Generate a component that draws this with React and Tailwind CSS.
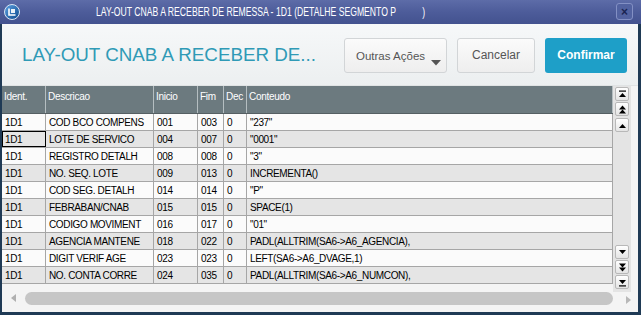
import React from "react";

const rows = [
  ["1D1", "COD BCO COMPENS", "001", "003", "0", '"237"'],
  ["1D1", "LOTE DE SERVICO", "004", "007", "0", '"0001"'],
  ["1D1", "REGISTRO DETALH", "008", "008", "0", '"3"'],
  ["1D1", "NO. SEQ. LOTE", "009", "013", "0", "INCREMENTA()"],
  ["1D1", "COD SEG. DETALH", "014", "014", "0", '"P"'],
  ["1D1", "FEBRABAN/CNAB", "015", "015", "0", "SPACE(1)"],
  ["1D1", "CODIGO MOVIMENT", "016", "017", "0", '"01"'],
  ["1D1", "AGENCIA MANTENE", "018", "022", "0", "PADL(ALLTRIM(SA6->A6_AGENCIA),"],
  ["1D1", "DIGIT VERIF AGE", "023", "023", "0", "LEFT(SA6->A6_DVAGE,1)"],
  ["1D1", "NO. CONTA CORRE", "024", "035", "0", "PADL(ALLTRIM(SA6->A6_NUMCON),"],
];

const headers = ["Ident.", "Descricao", "Inicio", "Fim", "Dec", "Conteudo"];
const widths = ["w-[44px]", "w-[108px]", "w-[44px]", "w-[26px]", "w-[23px]", "flex-1"];

function Tri({ down, bar, dbl }) {
  return (
    <svg width="9" height="9" viewBox="0 0 9 9">
      {!down && bar && <rect x="1" y="0.5" width="7" height="1.2" fill="#000" />}
      {!down && !dbl && <polygon points="4.5,3 8,7 1,7" fill="#000" />}
      {!down && dbl && (
        <>
          <polygon points="4.5,0.5 8,4.5 1,4.5" fill="#000" />
          <polygon points="4.5,4.5 8,8.5 1,8.5" fill="#000" />
        </>
      )}
      {down && !dbl && <polygon points="1,2 8,2 4.5,6" fill="#000" />}
      {down && dbl && (
        <>
          <polygon points="1,0.5 8,0.5 4.5,4.5" fill="#000" />
          <polygon points="1,4.5 8,4.5 4.5,8.5" fill="#000" />
        </>
      )}
      {down && bar && <rect x="1" y="7.3" width="7" height="1.2" fill="#000" />}
    </svg>
  );
}

function SBtn(props) {
  return (
    <div className="w-[14px] h-[14px] rounded-[2px] border border-[#b8b8b8] bg-gradient-to-b from-[#ffffff] to-[#e4e4e4] flex items-center justify-center">
      <Tri {...props} />
    </div>
  );
}

export default function App() {
  return (
    <div
      className="w-[641px] h-[315px] overflow-hidden flex flex-col bg-[#f2f4f5]"
      style={{ fontFamily: '"Liberation Sans", Arial, sans-serif' }}
    >
      {/* Title bar */}
      <div className="h-[24px] shrink-0 relative flex items-center pl-[96px] bg-gradient-to-b from-[#5d6ca8] via-[#4d5c9a] to-[#43528f]">
        <div className="absolute left-[4px] top-[4px] w-[16px] h-[16px] rounded-full border border-[#d8e6f5] bg-gradient-to-br from-[#5aa0e0] to-[#0d4a8e] flex items-center justify-center">
          <svg width="10" height="10" viewBox="0 0 10 10">
            <path d="M2 1.5 V8 H8.5" stroke="#fff" strokeWidth="1.6" fill="none" />
            <rect x="4" y="2" width="4" height="4" fill="#fff" opacity="0.9" />
          </svg>
        </div>
        <div className="text-white text-[13.5px] whitespace-pre origin-left scale-x-[0.64]">
          {"LAY-OUT CNAB A RECEBER DE REMESSA - 1D1 (DETALHE SEGMENTO P           )"}
        </div>
        <div className="absolute right-[8px] top-[3px] w-[17px] h-[17px] rounded-[3px] border border-[#8390c4] bg-[#5262a0] flex items-center justify-center">
          <span className="text-[#1a2452] text-[12px] font-bold leading-none">×</span>
        </div>
      </div>

      {/* Body */}
      <div className="flex-1 flex flex-col border-l-2 border-r-[3px] border-b-[3px] border-[#1f3a55] min-h-0">
        {/* Header area */}
        <div className="h-[62px] shrink-0 flex items-center pl-[20px] pr-[11px] bg-gradient-to-b from-[#f6f8f9] to-[#eceff0] border-b border-[#e0e3e4]">
          <div className="flex-1 text-[18.8px] text-[#2f9ab6] leading-none pt-[2px]">LAY-OUT CNAB A RECEBER DE...</div>
          <div className="flex gap-[10px] pt-[1px]">
            <div className="relative w-[103px] h-[35px] rounded-[3px] border border-[#d2d5d7] bg-gradient-to-b from-[#fbfbfb] to-[#eeeeee] flex items-start pt-[9px] pl-[11px] text-[11.5px] text-[#555]">
              Outras Ações
              <svg className="absolute right-[5px] bottom-[6px]" width="10" height="6" viewBox="0 0 10 6">
                <polygon points="0,0 10,0 5,5.5" fill="#555" />
              </svg>
            </div>
            <div className="w-[78px] h-[35px] rounded-[3px] border border-[#d2d5d7] bg-gradient-to-b from-[#fbfbfb] to-[#eeeeee] flex items-center justify-center text-[12px] text-[#555]">
              Cancelar
            </div>
            <div className="w-[82px] h-[35px] rounded-[3px] bg-[#1e9fc8] flex items-center justify-center text-[12px] font-bold text-white">
              Confirmar
            </div>
          </div>
        </div>

        {/* Grid region */}
        <div className="flex-1 flex min-h-0 bg-[#f4f4f4]">
          <div className="w-[611px] flex flex-col">
            <div className="flex flex-col bg-[#fafafa]">
              <div className="h-[28px] flex bg-[#6c7a7f] border-b border-[#555f63] text-white text-[10px] tracking-[-0.3px]">
                {headers.map((h, i) => (
                  <div key={i} className={`${widths[i]} shrink-0 pl-[2px] pt-[3px] border-r border-[#b5bec1] whitespace-nowrap overflow-hidden`}>
                    {h}
                  </div>
                ))}
              </div>
              {rows.map((r, ri) => (
                <div
                  key={ri}
                  className={`h-[17px] flex border-b border-[#a6a6a6] text-[10px] tracking-[-0.35px] text-black ${ri % 2 === 1 ? "bg-[#e5e5e5]" : "bg-[#fbfbfb]"}`}
                >
                  {r.map((c, ci) => (
                    <div
                      key={ci}
                      className={`${widths[ci]} shrink-0 pl-[3px] flex items-center whitespace-nowrap overflow-hidden border-r border-[#a6a6a6] ${ri === 1 && ci === 0 ? "outline outline-1 outline-black -outline-offset-1" : ""}`}
                    >
                      {c}
                    </div>
                  ))}
                </div>
              ))}
            </div>
            <div className="h-[7px]" />
            <div className="h-[14px] flex items-center">
              <svg className="ml-[9px] mr-[9px]" width="5" height="8" viewBox="0 0 5 8">
                <polygon points="5,0 5,8 0,4" fill="#b0b0b0" />
              </svg>
              <div className="flex-1 h-[13px] rounded-full bg-[#c6c6c6]" />
            </div>
          </div>
          <div className="w-[18px] bg-[#e4e4e4] flex flex-col justify-between items-center pt-[1px] pb-[3px] h-[206px]">
            <div className="flex flex-col gap-[1px]">
              <SBtn bar />
              <SBtn dbl />
              <div className="mt-[1px]"><SBtn /></div>
            </div>
            <div className="flex flex-col gap-[1px]">
              <SBtn down />
              <SBtn down dbl />
              <SBtn down bar />
            </div>
          </div>
          <div className="flex-1 flex items-start">
            <svg className="mt-[210px] ml-[-5px]" width="5" height="8" viewBox="0 0 5 8">
              <polygon points="0,0 0,8 5,4" fill="#b8b8b8" />
            </svg>
          </div>
        </div>
      </div>
    </div>
  );
}
